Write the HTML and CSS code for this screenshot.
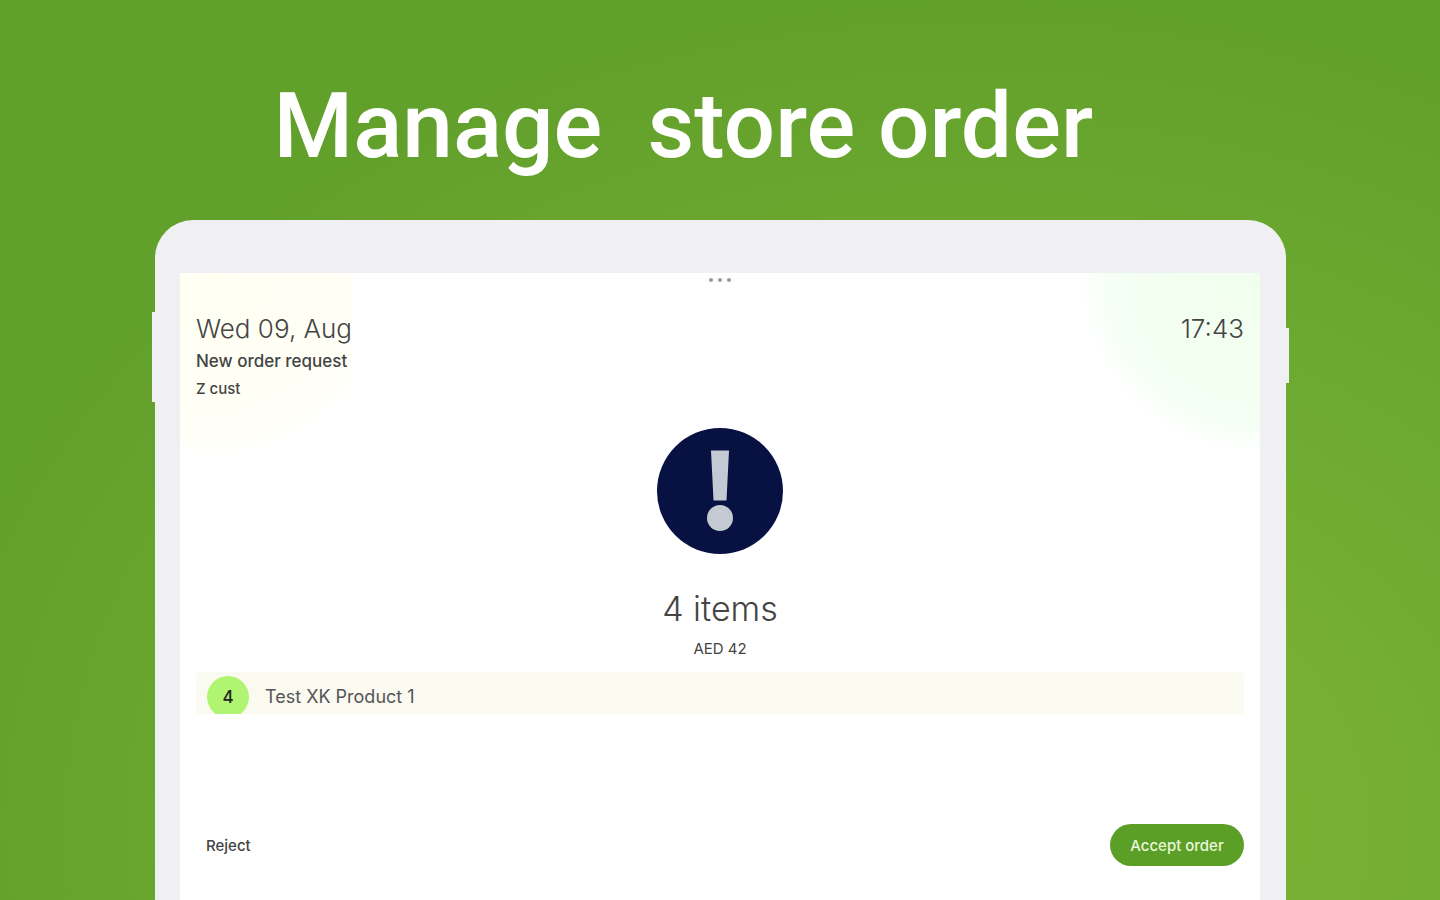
FILE: index.html
```
<!doctype html>
<html lang="en">
<head>
    <meta charset="UTF-8">
    <meta name="viewport" content="width=device-width, initial-scale=1.0">
    <title>Manage store order</title>
    <link rel="stylesheet" href="styles.css">
</head>
<body>
<h1 class="headline">Manage  store order</h1>

<div class="tablet">
    <span class="side-key key-left"></span>
    <span class="side-key key-right"></span>

    <main class="screen">
        <div class="dots"><i></i><i></i><i></i></div>

        <header class="top">
            <div class="request">
                <p class="date">Wed 09, Aug</p>
                <p class="label">New order request</p>
                <p class="label customer">Z cust</p>
            </div>
            <time class="date">17:43</time>
        </header>

        <section class="summary">
            <svg class="alert" viewBox="0 0 128 128" aria-hidden="true">
                <circle cx="64" cy="64" r="63" fill="#071142"/>
                <path d="M55 23.500h18l-2.500 50h-13z" fill="#c3cad3"/>
                <circle cx="64" cy="91" r="13" fill="#c3cad3"/>
            </svg>
            <h2 class="count">4 items</h2>
            <p class="price">AED 42</p>
        </section>

        <ul class="order-list">
            <li>
                <span class="qty">4</span>
                <span class="product">Test XK Product 1</span>
            </li>
        </ul>

        <div class="actions">
            <button type="button" class="reject">Reject</button>
            <button type="button" class="accept">Accept order</button>
        </div>
    </main>
</div>
</body>
</html>
```
FILE: styles.css
```
* {
    margin: 0;
    padding: 0;
    box-sizing: border-box;
}

body {
    display: flex;
    flex-direction: column;
    min-height: 100vh;
    overflow-x: hidden;
    background: #62a02c radial-gradient(ellipse 74% 92% at 68% 92%, #7db536 0%, #78b034 30%, #6daa30 62%, #62a02c 100%);
    font-family: Inter, Roboto, sans-serif;
    color: #444;
}

ul {
    list-style: none;
}

.headline {
    padding: 66px 0 0 19%;
    height: 220px;
    line-height: 120px;
    font-family: Roboto, sans-serif;
    font-size: 91px;
    font-weight: 500;
    color: #fff;
    white-space: pre;
}

/* tablet */
.tablet {
    position: relative;
    display: flex;
    flex: 1;
    margin: 0 154px 0 155px;
    padding: 53px 26px 0 25px;
    background: #f0f0f3;
    border-radius: 38px 38px 0 0;
}

.side-key {
    position: absolute;
    width: 3px;
    background: #f0f0f3;
}

.key-left {
    top: 92px;
    left: -3px;
    height: 90px;
}

.key-right {
    top: 108px;
    right: -3px;
    height: 55px;
}

.screen {
    display: flex;
    flex: 1;
    flex-direction: column;
    padding: 4px 16px 34px;
    background:
        radial-gradient(circle 184px at 30px 0, #fffff2 0%, #fffff8 92%, transparent 100%) 0 0 / 172px 190px no-repeat,
        radial-gradient(circle 180px at 100% 0, #f0ffed 0%, #f5fff4 85%, transparent 100%),
        #fff;
}

.dots {
    display: flex;
    justify-content: center;
    gap: 5px;
    height: 36px;
    padding-top: 1px;
}

.dots i {
    width: 4px;
    height: 4px;
    border-radius: 50%;
    background: #999;
}

/* header */
.top {
    display: flex;
    justify-content: space-between;
}

.date {
    line-height: 32px;
    font-size: 26px;
    font-weight: 300;
}

.label {
    line-height: 32px;
    font-size: 17px;
    font-weight: 500;
}

.customer {
    line-height: 24px;
    font-size: 15px;
}

/* summary */
.summary {
    display: flex;
    flex-direction: column;
    align-items: center;
    padding-top: 26px;
}

.alert {
    width: 128px;
    height: 128px;
}

.count {
    margin-top: 32px;
    line-height: 44px;
    font-size: 34px;
    font-weight: 300;
}

.price {
    margin-top: 6px;
    line-height: 24px;
    font-size: 15px;
}

/* order list */
.order-list {
    margin-top: 11px;
}

.order-list li {
    display: flex;
    height: 42px;
    padding: 4px 11px 0;
    overflow: hidden;
    border-radius: 4px;
    background: #fafaf1;
}

.qty {
    width: 42px;
    height: 42px;
    border-radius: 50%;
    background: #aff571;
    line-height: 42px;
    text-align: center;
    font-size: 17px;
    font-weight: 500;
    color: #222;
}

.product {
    margin-left: 16px;
    line-height: 42px;
    font-size: 18px;
    color: #555;
}

/* buttons */
.actions {
    display: flex;
    justify-content: space-between;
    margin-top: auto;
}

button {
    height: 42px;
    border: none;
    border-radius: 21px;
    font-family: inherit;
    font-size: 15px;
    font-weight: 500;
    cursor: pointer;
}

.reject {
    padding: 0 10px;
    background: none;
    color: #444;
}

.accept {
    width: 134px;
    background: #5b9f26;
    color: #e9f7dc;
}
```
